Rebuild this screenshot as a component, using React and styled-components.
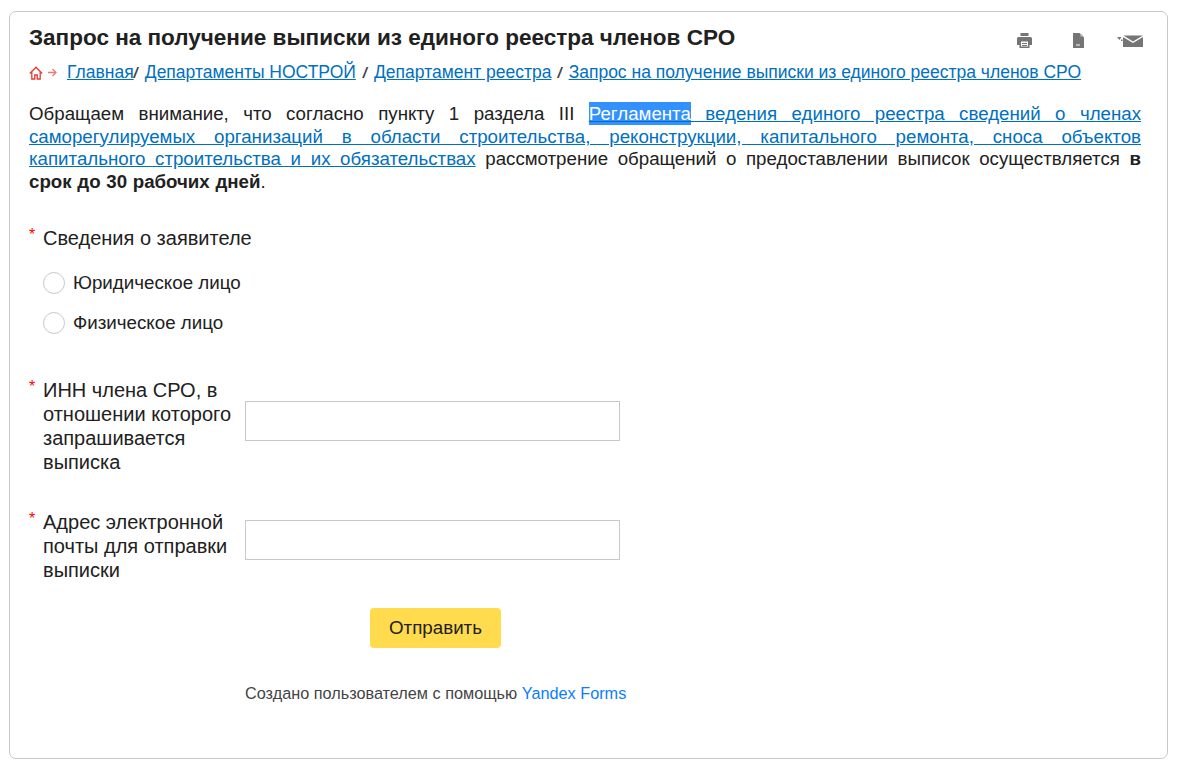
import React from 'react';
import styled, { createGlobalStyle } from 'styled-components';

const GlobalStyle = createGlobalStyle`
  html, body { margin: 0; padding: 0; background: #ffffff; }
  body { font-family: "Liberation Sans", Arial, sans-serif; color: #212121; }
`;

const Card = styled.div`
  box-sizing: border-box;
  width: 1159px;
  height: 748px;
  margin: 11px 0 0 9px;
  padding: 11px 26px 0 19px;
  background: #ffffff;
  border: 1px solid #c8c8c8;
  border-radius: 7px;
`;

const Header = styled.div`
  display: flex;
  justify-content: space-between;
  align-items: flex-start;
`;

const Title = styled.h1`
  margin: 0;
  font-size: 22.5px;
  line-height: 30px;
  font-weight: 700;
  color: #212121;
`;

const Tools = styled.div`
  display: flex;
  align-items: center;
  margin: 10px -2px 0 0;
`;

const ToolSlot = styled.span`
  display: flex;
  margin-left: ${(p) => p.$left}px;
`;

const Breadcrumbs = styled.div`
  display: flex;
  align-items: center;
  margin-top: 9px;
  font-size: 17.5px;
  line-height: 21px;
`;

const HomeIcons = styled.span`
  display: inline-flex;
  align-items: center;
  gap: 5px;
  margin-right: 10px;
`;

const Crumb = styled.a`
  color: #0070c0;
  text-decoration: underline;
`;

const Slash = styled.span`
  color: #444444;
  font-style: italic;
  font-weight: 700;
  font-size: 15px;
  margin: 0 ${(p) => p.$right}px 0 ${(p) => p.$left}px;
`;

const Notice = styled.p`
  margin: 20px 0 0;
  font-size: 18.7px;
  line-height: 22.5px;
  word-spacing: 2px;
  text-align: justify;
  color: #212121;
`;

const NoticeLink = styled.a`
  color: #0070c0;
  text-decoration: underline;
`;

const Selected = styled.span`
  padding: 1px 0;
  background: #3390ff;
  color: #ffffff;
`;

const Deadline = styled.b`
  word-spacing: 0.5px;
`;

const Form = styled.form`
  margin-top: 33px;
`;

const Label = styled.div`
  position: relative;
  padding-left: 14px;
  font-size: 20px;
  line-height: 24px;
  color: #212121;
`;

const Star = styled.span`
  position: absolute;
  left: 0;
  top: -3px;
  color: #ff0000;
  font-size: 16px;
`;

const RadioGroup = styled.div`
  display: flex;
  flex-direction: column;
  gap: 18px;
  margin: 22px 0 0 14px;
`;

const RadioRow = styled.label`
  display: flex;
  align-items: center;
  gap: 8px;
  font-size: 18.75px;
  line-height: 22px;
  color: #212121;
`;

const RadioCircle = styled.span`
  box-sizing: border-box;
  width: 22px;
  height: 22px;
  border: 1px solid #c9c9c9;
  border-radius: 50%;
  background: #ffffff;
`;

const Field = styled.div`
  display: grid;
  grid-template-columns: 216px 375px;
  align-items: start;
  margin-top: ${(p) => p.$top}px;
`;

const Input = styled.input`
  box-sizing: border-box;
  width: 375px;
  height: 40px;
  margin-top: ${(p) => p.$top}px;
  padding: 0 10px;
  border: 1px solid #c9c9c9;
  background: #ffffff;
  outline: none;
`;

const Submit = styled.button`
  display: block;
  width: 131px;
  height: 40px;
  margin: 26px 0 0 341px;
  padding: 0;
  border: 0;
  border-radius: 4px;
  background: #ffdb4d;
  color: #212121;
  font-family: "Liberation Sans", Arial, sans-serif;
  font-size: 18.75px;
`;

const Footer = styled.div`
  margin: 35px 0 0 216px;
  font-size: 16.25px;
  line-height: 20px;
  color: #444444;
`;

const FooterLink = styled.a`
  color: #0a7dff;
`;

const PrintIcon = () => (
  <svg width="15" height="15" viewBox="0 0 15 15" fill="#757575">
    <path d="M3.500 0h8v3h-8z" />
    <path fillRule="evenodd" d="M1.500 4h12A1.500 1.500 0 0 1 15 5.500V12h-2.500v3h-10v-3H0V5.500A1.500 1.500 0 0 1 1.500 4zM4 8.500v5h7v-5z" />
    <path d="M5 10h5v1H5zM5 12h5v1H5z" />
  </svg>
);

const FileIcon = () => (
  <svg width="11" height="15" viewBox="0 0 11 15" fill="#757575">
    <path fillRule="evenodd" d="M0 0h6.500L11 4.500V15H0zM3 11.500v1h4v-1z" />
    <path d="M7.500 0L11 3.500H7.500z" fill="#c4c4c4" />
  </svg>
);

const MailIcon = () => (
  <svg width="26" height="12" viewBox="0 0 26 12" fill="#757575">
    <path d="M0 2h4.500L2.500 5z" />
    <path d="M4 4.500h1.500v1.500H4z" />
    <path d="M6.500 .5h19.500L16 6.500z" />
    <path d="M6 2l10 6 10-6v10H6z" />
  </svg>
);

const HomeIcon = () => (
  <svg width="14" height="14" viewBox="0 0 14 14" fill="none" stroke="#e53935" strokeWidth="1.300">
    <path d="M.8 7.500L7 1.200l6.200 6.300" />
    <path d="M2.800 6v7h3V9h2.400v4h3V6" />
  </svg>
);

const ArrowIcon = () => (
  <svg width="9" height="9" viewBox="0 0 9 9" fill="none" stroke="#ef7b75" strokeWidth="1.300">
    <path d="M0 4.500h8M4.500 1l3.500 3.500L4.500 8" />
  </svg>
);

const App = () => {
  return (
    <>
      <GlobalStyle />
      <Card>
        <Header>
          <Title>Запрос на получение выписки из единого реестра членов СРО</Title>
          <Tools>
            <ToolSlot $left={0}><PrintIcon /></ToolSlot>
            <ToolSlot $left={41}><FileIcon /></ToolSlot>
            <ToolSlot $left={33}><MailIcon /></ToolSlot>
          </Tools>
        </Header>
        <Breadcrumbs>
          <HomeIcons>
            <HomeIcon />
            <ArrowIcon />
          </HomeIcons>
          <Crumb href="#">Главная</Crumb>
          <Slash $left={0} $right={7}>/</Slash>
          <Crumb href="#">Департаменты НОСТРОЙ</Crumb>
          <Slash $left={7} $right={7}>/</Slash>
          <Crumb href="#">Департамент реестра</Crumb>
          <Slash $left={6} $right={7}>/</Slash>
          <Crumb href="#">Запрос на получение выписки из единого реестра членов СРО</Crumb>
        </Breadcrumbs>
        <Notice>
          Обращаем внимание, что согласно пункту 1 раздела III{' '}
          <NoticeLink href="#">
            <Selected>Регламента</Selected> ведения единого реестра сведений о членах саморегулируемых организаций в области строительства, реконструкции, капитального ремонта, сноса объектов капитального строительства и их обязательствах
          </NoticeLink>{' '}
          рассмотрение обращений о предоставлении выписок осуществляется <Deadline>в срок до 30 рабочих дней</Deadline>.
        </Notice>
        <Form>
          <Label><Star>*</Star>Сведения о заявителе</Label>
          <RadioGroup>
            <RadioRow><RadioCircle />Юридическое лицо</RadioRow>
            <RadioRow><RadioCircle />Физическое лицо</RadioRow>
          </RadioGroup>
          <Field $top={44}>
            <Label><Star>*</Star>ИНН члена СРО, в отношении которого запрашивается выписка</Label>
            <Input $top={23} />
          </Field>
          <Field $top={36}>
            <Label><Star>*</Star>Адрес электронной почты для отправки выписки</Label>
            <Input $top={10} />
          </Field>
          <Submit type="button">Отправить</Submit>
          <Footer>Создано пользователем с помощью <FooterLink>Yandex Forms</FooterLink></Footer>
        </Form>
      </Card>
    </>
  );
};

export default App;
